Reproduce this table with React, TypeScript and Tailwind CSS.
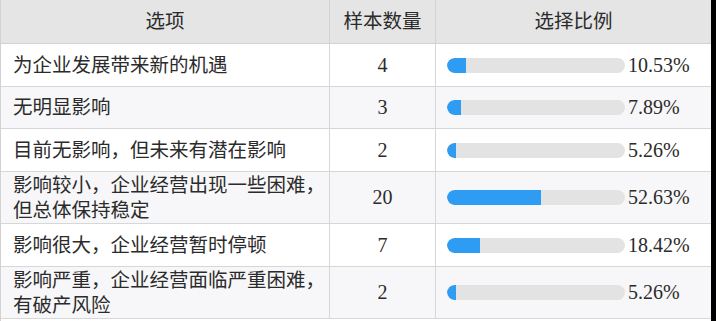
import { FC } from "react";

type Row = { label: string[]; count: number; pct: number };

const rows: Row[] = [
  { label: ["为企业发展带来新的机遇"], count: 4, pct: 10.53 },
  { label: ["无明显影响"], count: 3, pct: 7.89 },
  { label: ["目前无影响，但未来有潜在影响"], count: 2, pct: 5.26 },
  { label: ["影响较小，企业经营出现一些困难，", "但总体保持稳定"], count: 20, pct: 52.63 },
  { label: ["影响很大，企业经营暂时停顿"], count: 7, pct: 18.42 },
  { label: ["影响严重，企业经营面临严重困难，", "有破产风险"], count: 2, pct: 5.26 },
];

const Bar: FC<{ pct: number }> = ({ pct }) => (
  <div className="flex items-center pl-[11px]">
    <div className="w-[178px] h-[15px] rounded-full bg-[#e3e3e3] overflow-hidden">
      <div className="h-full rounded-l-full bg-[#2e9cf3]" style={{ width: `${pct}%` }} />
    </div>
    <span className="ml-[3px] text-[20px]">{pct.toFixed(2)}%</span>
  </div>
);

const App: FC = () => {
  return (
    <div
      className="flex bg-white text-[#2b2b2b] text-[19.5px] leading-[25px]"
      style={{ fontFamily: '"Liberation Serif", "Noto Sans CJK SC", serif' }}
    >
      <div className="w-[711px] h-[321px] border-l border-[#d2d2d2]">
        <div className="grid grid-cols-[329px_106px_275px] h-[44px] bg-[#e5e5e5] border-b border-[#d2d2d2]">
          <div className="flex items-center justify-center border-r border-[#d2d2d2]">选项</div>
          <div className="flex items-center justify-center border-r border-[#d2d2d2]">样本数量</div>
          <div className="flex items-center justify-center">选择比例</div>
        </div>
        {rows.map((row, i) => (
          <div
            key={`row-${i}`}
            className={`grid grid-cols-[329px_106px_275px] border-b border-[#d7d7d7] ${
              row.label.length > 1 ? "h-[52px]" : i == 1 ? "h-[42px]" : "h-[43px]"
            } ${i % 2 == 1 ? "bg-[#f7f7f9]" : "bg-white"}`}
          >
            <div className="flex flex-col justify-center pl-[12px] border-r border-[#d7d7d7] whitespace-nowrap">
              {row.label.map((line) => (
                <span key={line}>{line}</span>
              ))}
            </div>
            <div className="flex items-center justify-center border-r border-[#d7d7d7] text-[20px]">
              {row.count}
            </div>
            <Bar pct={row.pct} />
          </div>
        ))}
      </div>
      <div className="w-[5px] h-[321px] bg-black" />
    </div>
  );
};

export default App;
